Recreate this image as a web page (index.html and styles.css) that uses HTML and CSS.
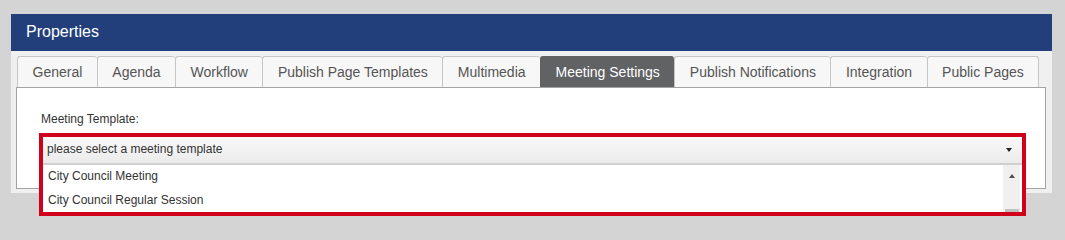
FILE: index.html
```html
<!DOCTYPE html>
<html lang="en">
<head>
<meta charset="utf-8">
<title>Properties</title>
<link rel="stylesheet" href="styles.css">
</head>
<body>
<div class="panel">
  <div class="panel-header">Properties</div>
  <div class="panel-body">
    <ul class="tabs">
      <li class="tab">General</li>
      <li class="tab">Agenda</li>
      <li class="tab">Workflow</li>
      <li class="tab">Publish Page Templates</li>
      <li class="tab">Multimedia</li>
      <li class="tab active">Meeting Settings</li>
      <li class="tab">Publish Notifications</li>
      <li class="tab">Integration</li>
      <li class="tab">Public Pages</li>
    </ul>
    <div class="tab-content">
      <div class="field-label">Meeting Template:</div>
      <div class="highlight">
        <div class="select">
          <span class="select-text">please select a meeting template</span>
          <span class="caret"></span>
        </div>
        <div class="dropdown">
          <ul class="options">
            <li>City Council Meeting</li>
            <li>City Council Regular Session</li>
          </ul>
          <div class="scrollbar">
            <span class="scroll-up"></span>
            <span class="scroll-thumb"></span>
          </div>
        </div>
      </div>
    </div>
  </div>
</div>
</body>
</html>
```
FILE: styles.css
```css
html, body {
  background: #d4d4d4;
}
body {
  margin: 14px 0 0 11px;
  min-height: 220px;
  font-family: "Liberation Sans", Arial, sans-serif;
}
.panel {
  width: 1041px;
}
.panel-header {
  background: #223f7b;
  color: #fff;
  font-size: 16px;
  line-height: 35px;
  padding: 0 15px 2px;
}
.panel-body {
  background: #f0f0f0;
  padding: 5px 6px 4px 5px;
}
.tabs {
  display: flex;
  list-style: none;
  margin: 0;
  padding: 0 0 0 1px;
}
.tab {
  height: 30px;
  line-height: 30px;
  padding: 0 14.5px;
  font-size: 14px;
  color: #555;
  background: #f7f7f7;
  border: 1px solid #c6c6c6;
  border-bottom: 0;
  border-right: 0;
  border-radius: 3px 3px 0 0;
  white-space: nowrap;
}
.tab:last-child {
  border-right: 1px solid #c6c6c6;
}
.tab.active {
  background: #616264;
  border-color: #616264;
  color: #fff;
}
.tab-content {
  background: #fff;
  border: 1px solid #a3a3a3;
  padding: 24px 19px 0 22px;
}
.field-label {
  font-size: 12px;
  line-height: 14px;
  color: #333;
  padding-left: 2px;
  margin-bottom: 7px;
}
.highlight {
  border: 4px solid #d0021b;
  margin-bottom: -28px;
  position: relative;
  z-index: 2;
}
.select {
  display: flex;
  justify-content: space-between;
  align-items: center;
  height: 24px;
  padding: 0 10px 2px 4px;
  background: linear-gradient(#f8f8f8, #ebebeb);
  border-bottom: 2px solid #cfcfcf;
  font-size: 12px;
  color: #333;
}
.select-text {
  line-height: 24px;
}
.caret {
  width: 0;
  height: 0;
  border-left: 3px solid transparent;
  border-right: 3px solid transparent;
  border-top: 4px solid #222;
  margin-top: 2px;
}
.dropdown {
  display: flex;
  height: 47px;
  background: #fff;
}
.options {
  flex: 1;
  list-style: none;
  margin: 0;
  padding: 0;
  overflow: hidden;
  font-size: 12px;
  color: #333;
}
.options li {
  line-height: 23.5px;
  padding-left: 5px;
}
.scrollbar {
  width: 17px;
  margin-right: 2px;
  background: #f0f0f0;
  display: flex;
  flex-direction: column;
  align-items: center;
}
.scroll-up {
  width: 0;
  height: 0;
  border-left: 3.5px solid transparent;
  border-right: 3.5px solid transparent;
  border-bottom: 4px solid #505050;
  margin-top: 9px;
}
.scroll-thumb {
  margin-top: auto;
  width: 14px;
  height: 3px;
  background: #c1c1c1;
}
```
